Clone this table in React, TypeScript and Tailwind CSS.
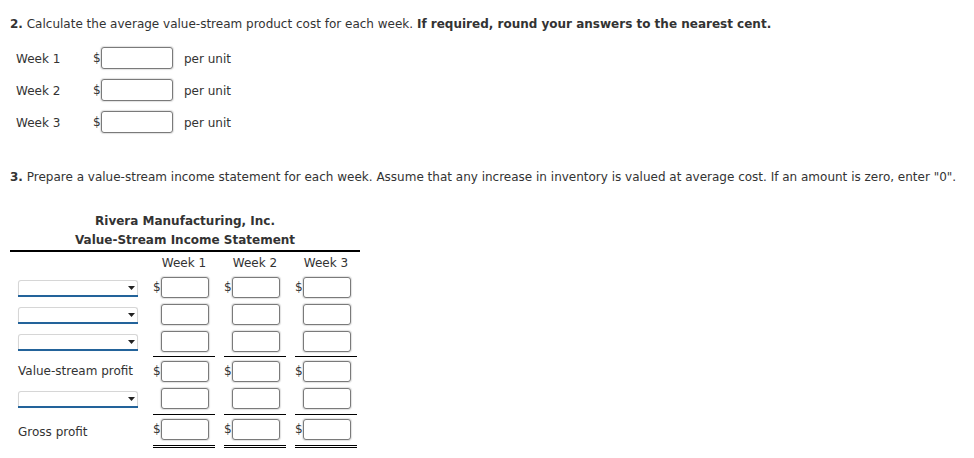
import React from "react";

const font = { fontFamily: '"DejaVu Sans", Verdana, sans-serif' };

function Box({ w }: { w: string }) {
  return (
    <div
      className={`${w} h-[21px] rounded-[3px] border border-[#7a7a7a] bg-white shadow-[0_0_1px_1px_rgba(0,0,0,0.12)]`}
    />
  );
}

function Drop() {
  return (
    <div className="relative w-[120px] h-[16px] rounded-t-[3px] border border-b-0 border-[#d6d6d6] bg-white shadow-[0_1px_1px_rgba(0,0,0,0.08)]">
      <div className="absolute left-[-1px] right-[-1px] bottom-[-1px] h-[2px] bg-[#23639a]" />
      <svg className="absolute right-[2px] top-[5px]" width="7" height="4" viewBox="0 0 7 4">
        <polygon points="0,0 7,0 3.5,4" fill="#222" />
      </svg>
    </div>
  );
}

function Cell({
  dollar,
  pt,
  h,
  border,
}: {
  dollar?: boolean;
  pt: string;
  h: string;
  border?: "single" | "double";
}) {
  const b =
    border === "single"
      ? "border-b border-black"
      : border === "double"
      ? "border-b-[3px] border-double border-black"
      : "";
  return (
    <div className={`w-[62px] ${h} ${pt} ${b} flex`}>
      <span className="w-[8px] text-[12px] leading-[21px] text-[#333]">{dollar ? "$" : ""}</span>
      <Box w="w-[48px]" />
    </div>
  );
}

function Row({
  label,
  drop,
  dollar,
  pt,
  h,
  border,
  labelPt,
}: {
  label?: string;
  drop?: boolean;
  dollar?: boolean;
  pt: string;
  h: string;
  border?: "single" | "double";
  labelPt?: string;
}) {
  return (
    <div className="flex">
      <div className={`w-[143px] pl-[8px] ${pt}`}>
        {drop ? (
          <div className="pt-[3px]">
            <Drop />
          </div>
        ) : (
          <div className={`text-[12px] leading-[21px] text-[#333] ${labelPt ?? ""}`}>{label}</div>
        )}
      </div>
      <div className="flex gap-[9px]">
        <Cell dollar={dollar} pt={pt} h={h} border={border} />
        <Cell dollar={dollar} pt={pt} h={h} border={border} />
        <Cell dollar={dollar} pt={pt} h={h} border={border} />
      </div>
    </div>
  );
}

export default function App() {
  const weeks = ["Week 1", "Week 2", "Week 3"];
  return (
    <div style={font} className="bg-white w-[974px] h-[458px] pl-[10px] pt-[16px] text-[#333]">
      <div className="text-[12px] leading-[16px]">
        <b>2.</b> Calculate the average value-stream product cost for each week.{" "}
        <b>If required, round your answers to the nearest cent.</b>
      </div>
      <div className="mt-[10px] pl-[6px]">
        {weeks.map((w) => (
          <div key={w} className="flex items-center h-[32px] text-[12px]">
            <div className="w-[77px] pt-[1px]">{w}</div>
            <span className="w-[8px]">$</span>
            <div className="w-[72px] h-[22px] rounded-[3px] border border-[#7a7a7a] bg-white shadow-[0_0_1px_1px_rgba(0,0,0,0.12)]" />
            <span className="ml-[11px] pt-[1px]">per unit</span>
          </div>
        ))}
      </div>
      <div className="mt-[31px] text-[12px] leading-[16px] whitespace-nowrap">
        <b>3.</b> Prepare a value-stream income statement for each week. Assume that any increase in inventory is
        valued at average cost. If an amount is zero, enter "0".
      </div>
      <div className="w-[350px] mt-[27px]">
        <div className="border-b-2 border-black text-center font-bold text-[12px] leading-[19px] pb-0">
          <div>Rivera Manufacturing, Inc.</div>
          <div>Value-Stream Income Statement</div>
        </div>
        <div className="flex h-[22px] items-center text-[12px]">
          <div className="w-[143px]" />
          <div className="flex gap-[9px]">
            {weeks.map((w) => (
              <div key={w} className="w-[62px] text-center">
                {w}
              </div>
            ))}
          </div>
        </div>
        <Row drop dollar pt="pt-[3px]" h="h-[27px]" />
        <Row drop pt="pt-[3px]" h="h-[27px]" />
        <Row drop pt="pt-[3px]" h="h-[29px]" border="single" />
        <Row label="Value-stream profit" dollar pt="pt-[4px]" h="h-[27px]" />
        <Row drop pt="pt-[4px]" h="h-[31px]" border="single" />
        <Row label="Gross profit" dollar pt="pt-[4px]" h="h-[33px]" border="double" labelPt="pt-[3px]" />
      </div>
    </div>
  );
}
